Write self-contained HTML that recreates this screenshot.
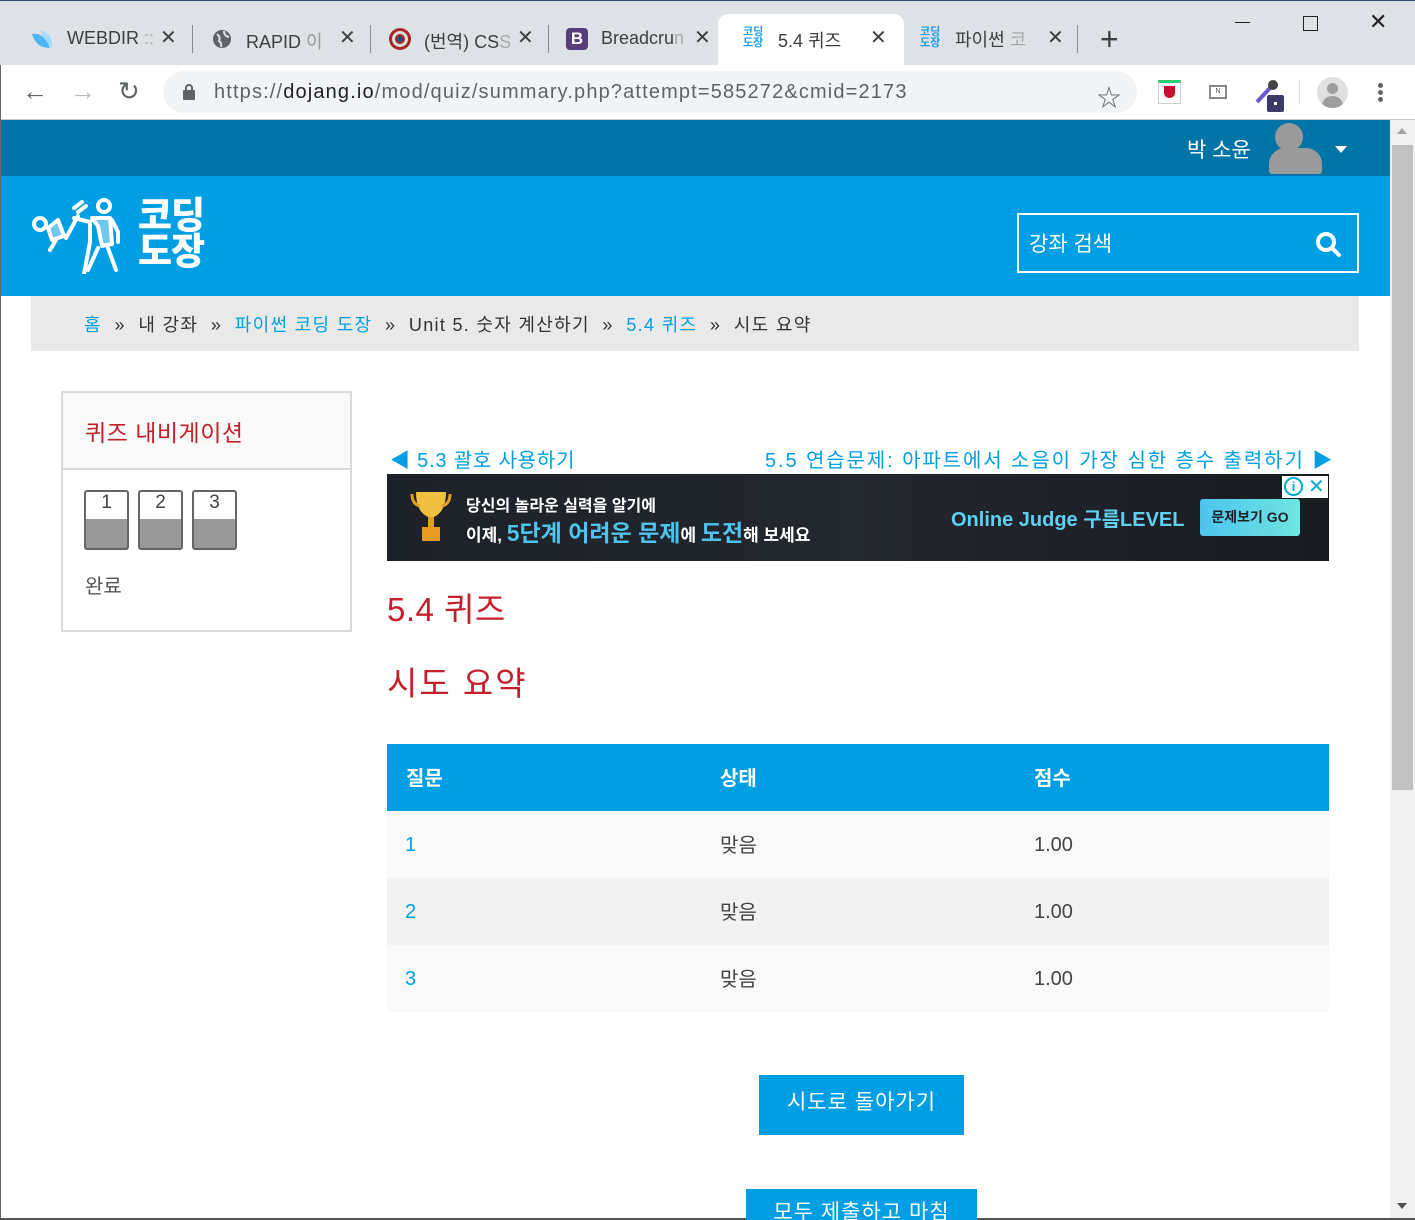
<!DOCTYPE html>
<html><head><meta charset="utf-8">
<style>
*{margin:0;padding:0;box-sizing:border-box}
body{width:1415px;height:1220px;overflow:hidden;position:relative;background:#fff;font-family:"Liberation Sans","Noto Sans CJK KR","NanumGothic",sans-serif;color:#333}
.a{position:absolute;white-space:nowrap}
.tab{position:absolute;top:22px;font-size:18px;color:#3c4043}
.x{position:absolute;top:25px;font-size:20px;color:#3c4043}
.sep{position:absolute;top:25px;width:1px;height:28px;background:#8a8d92}
.blue{color:#009fe3}
</style></head><body>
<div class="a" style="left:0;top:0;width:1415px;height:65px;background:#dee1e6"></div>
<div class="a" style="left:0;top:0;width:1415px;height:1px;background:#2a4d7a"></div>
<svg class="a" style="left:30px;top:28px" width="26" height="22"><path d="M2 6 Q14 4 20 20 Q6 20 2 6Z" fill="#4fb6f5"/><path d="M10 2 Q24 6 22 20 Q14 12 10 2Z" fill="#a6dafc"/></svg>
<div class="tab" style="left:67px;top:28px">WEBDIR <span style="color:#aaa">::</span></div>
<div class="x" style="left:160px">✕</div>
<div class="sep" style="left:192px"></div>
<svg class="a" style="left:212px;top:29px" width="20" height="20"><circle cx="10" cy="10" r="9" fill="#5f6368"/><path d="M5 5 Q9 8 7 12 Q10 14 9 18 M12 2 Q12 7 17 8" stroke="#dee1e6" stroke-width="2" fill="none"/></svg>
<div class="tab" style="left:246px;top:28px">RAPID <span style="color:#999">이</span></div>
<div class="x" style="left:339px">✕</div>
<div class="sep" style="left:370px"></div>
<svg class="a" style="left:388px;top:27px" width="24" height="24"><circle cx="12" cy="12" r="11" fill="#a62a22"/><circle cx="12" cy="12" r="8" fill="#ddd"/><circle cx="12" cy="12" r="5" fill="#a62a22"/><circle cx="12" cy="12" r="3" fill="#2a4b8a"/></svg>
<div class="tab" style="left:424px;top:28px">(번역) CS<span style="color:#aaa">S</span></div>
<div class="x" style="left:517px">✕</div>
<div class="sep" style="left:548px"></div>
<div class="a" style="left:566px;top:28px;width:22px;height:22px;background:#563d7c;border-radius:4px;color:#fff;font-weight:bold;font-size:17px;text-align:center;line-height:22px">B</div>
<div class="tab" style="left:601px;top:28px">Breadcru<span style="color:#aaa">n</span></div>
<div class="x" style="left:694px">✕</div>
<div class="a" style="left:718px;top:14px;width:186px;height:52px;background:#fff;border-radius:10px 10px 0 0"></div>
<div class="a" style="left:743px;top:27px;font-size:11px;line-height:11px;font-weight:bold;color:#1aa0e8">코딩<br>도장</div>
<div class="tab" style="left:778px;top:27px">5.4 퀴즈</div>
<div class="x" style="left:870px">✕</div>
<div class="a" style="left:920px;top:27px;font-size:11px;line-height:11px;font-weight:bold;color:#1aa0e8">코딩<br>도장</div>
<div class="tab" style="left:955px;top:26px">파이썬 <span style="color:#aaa">코</span></div>
<div class="x" style="left:1047px">✕</div>
<div class="sep" style="left:1077px"></div>
<div class="a" style="left:1100px;top:21px;font-size:32px;color:#3c4043;font-weight:300">+</div>
<div class="a" style="left:1235px;top:22px;width:15px;height:1px;background:#222"></div>
<div class="a" style="left:1303px;top:16px;width:15px;height:15px;border:1px solid #222"></div>
<div class="a" style="left:1369px;top:9px;font-size:22px;color:#222">✕</div>
<div class="a" style="left:0;top:65px;width:1415px;height:55px;background:#fff;border-bottom:1px solid #ccc"></div>
<div class="a" style="left:22px;top:76px;font-size:26px;color:#5f6368">←</div>
<div class="a" style="left:70px;top:76px;font-size:26px;color:#bbb">→</div>
<div class="a" style="left:118px;top:76px;font-size:26px;color:#5f6368">↻</div>
<div class="a" style="left:163px;top:71px;width:974px;height:42px;background:#f1f3f4;border-radius:21px"></div>
<svg class="a" style="left:182px;top:83px" width="14" height="18"><rect x="1" y="7" width="12" height="10" rx="1" fill="#5f6368"/><path d="M4 7 V5 a3 3 0 0 1 6 0 V7" stroke="#5f6368" stroke-width="2" fill="none"/></svg>
<div class="a" style="left:214px;top:81px;font-size:20px;color:#5f6368;letter-spacing:1.15px">https://<span style="color:#202124">dojang.io</span>/mod/quiz/summary.php?attempt=585272&amp;cmid=2173</div>
<div class="a" style="left:1097px;top:78px;font-size:24px;color:#5f6368">☆</div>
<div class="a" style="left:1158px;top:80px;width:23px;height:24px;border:1px solid #ccc;border-top:3px solid #2ecc71;background:#fff"></div>
<div class="a" style="left:1164px;top:86px;width:11px;height:12px;background:#c8102e;border-radius:0 0 5px 5px"></div>
<div class="a" style="left:1209px;top:85px;width:18px;height:14px;border:2px solid #888;font-size:7px;text-align:center;line-height:9px;color:#555">N</div>
<svg class="a" style="left:1254px;top:78px" width="34" height="36"><path d="M3 24 L16 10" stroke="#6a5acd" stroke-width="4"/><circle cx="19" cy="7" r="5" fill="#444"/><rect x="13" y="17" width="17" height="17" rx="2" fill="#3d3a6b"/><rect x="20" y="24" width="3" height="3" fill="#fff"/></svg>
<div class="a" style="left:1299px;top:80px;width:1px;height:24px;background:#ddd"></div>
<div class="a" style="left:1317px;top:77px;width:31px;height:31px;border-radius:50%;background:#e0e0e0;overflow:hidden"><div style="position:absolute;left:10px;top:6px;width:11px;height:11px;border-radius:50%;background:#9e9e9e"></div><div style="position:absolute;left:5px;top:19px;width:21px;height:14px;border-radius:10px 10px 0 0;background:#9e9e9e"></div></div>
<div class="a" style="left:1378px;top:83px;width:5px;height:5px;border-radius:50%;background:#5f6368;box-shadow:0 7px 0 #5f6368,0 14px 0 #5f6368"></div>
<div class="a" style="left:0;top:65px;width:1px;height:1155px;background:#666"></div>
<div class="a" style="left:1px;top:120px;width:1389px;height:56px;background:#0074a6"></div>
<div class="a" style="left:1187px;top:134px;font-size:21px;color:#fff">박 소윤</div>
<div class="a" style="left:1275px;top:123px;width:28px;height:28px;border-radius:50%;background:#9a9a9a"></div>
<div class="a" style="left:1269px;top:148px;width:53px;height:26px;border-radius:16px 16px 3px 3px;background:#9a9a9a"></div>
<div class="a" style="left:1335px;top:146px;width:0;height:0;border-left:6px solid transparent;border-right:6px solid transparent;border-top:7px solid #fff"></div>
<div class="a" style="left:1px;top:176px;width:1389px;height:120px;background:#009fe3"></div>
<svg class="a" style="left:30px;top:198px" width="92" height="76" fill="none" stroke="#fff" stroke-width="4" stroke-linecap="round" stroke-linejoin="round">
<circle cx="10" cy="26" r="6"/><path d="M18 30 L28 22 L34 38 L22 42 Z" fill="#6fc6f0"/><path d="M26 42 L20 52"/>
<path d="M36 40 L48 18 M44 10 L52 4 M48 14 L56 8"/><path d="M44 20 L60 24 L60 44 L54 76"/>
<circle cx="74" cy="8" r="6"/><path d="M62 20 L80 20 L82 46 L72 48 L68 28 Z" fill="#6fc6f0"/><path d="M82 22 L88 34 L88 44 M68 50 L58 72 M78 50 L86 72"/>
</svg>
<div class="a" style="left:138px;top:198px;font-size:37px;line-height:36px;font-weight:900;color:#fff;letter-spacing:-1px">코딩<br>도장</div>
<div class="a" style="left:1017px;top:213px;width:342px;height:60px;border:2px solid #fff"></div>
<div class="a" style="left:1029px;top:228px;font-size:21px;color:#fff">강좌 검색</div>
<svg class="a" style="left:1314px;top:230px" width="30" height="30"><circle cx="12" cy="12" r="8" stroke="#fff" stroke-width="4" fill="none"/><path d="M18 18 L25 25" stroke="#fff" stroke-width="4" stroke-linecap="round"/></svg>
<div class="a" style="left:31px;top:296px;width:1328px;height:55px;background:#e9e9e9"></div>
<div class="a" style="left:84px;top:311px;font-size:18px;color:#333;letter-spacing:1.3px"><span class="blue">홈</span> &nbsp;» &nbsp;내 강좌 &nbsp;» &nbsp;<span class="blue">파이썬 코딩 도장</span> &nbsp;» &nbsp;Unit 5. 숫자 계산하기 &nbsp;» &nbsp;<span class="blue">5.4 퀴즈</span> &nbsp;» &nbsp;시도 요약</div>
<div class="a" style="left:61px;top:391px;width:291px;height:241px;border:2px solid #d9d9d9"></div>
<div class="a" style="left:63px;top:393px;width:287px;height:77px;background:#f9f9f9;border-bottom:2px solid #d9d9d9"></div>
<div class="a" style="left:85px;top:414px;font-size:23px;color:#c4202a;letter-spacing:0.5px">퀴즈 내비게이션</div>
<div class="a" style="left:84px;top:490px;width:45px;height:60px;border:2px solid #666;border-radius:3px;background:linear-gradient(#fff 0 27px,#999 27px)"><div style="text-align:center;font-size:19px;color:#444">1</div></div>
<div class="a" style="left:138px;top:490px;width:45px;height:60px;border:2px solid #666;border-radius:3px;background:linear-gradient(#fff 0 27px,#999 27px)"><div style="text-align:center;font-size:19px;color:#444">2</div></div>
<div class="a" style="left:192px;top:490px;width:45px;height:60px;border:2px solid #666;border-radius:3px;background:linear-gradient(#fff 0 27px,#999 27px)"><div style="text-align:center;font-size:19px;color:#444">3</div></div>
<div class="a" style="left:85px;top:570px;font-size:20px;color:#555">완료</div>
<div class="a" style="left:390px;top:444px;font-size:20px;color:#009fe3;letter-spacing:0.8px">◀ 5.3 괄호 사용하기</div>
<div class="a" style="left:765px;top:444px;font-size:20px;color:#009fe3;letter-spacing:1.9px">5.5 연습문제: 아파트에서 소음이 가장 심한 층수 출력하기 ▶</div>
<div class="a" style="left:387px;top:474px;width:942px;height:87px;background:linear-gradient(90deg,#1d2128,#23272e 50%,#181b20)"></div>
<svg class="a" style="left:410px;top:490px" width="42" height="54"><path d="M6 2 H36 Q36 24 21 28 Q6 24 6 2Z" fill="#f0c040"/><path d="M2 4 Q2 14 10 16 M40 4 Q40 14 32 16" stroke="#e0a020" stroke-width="3" fill="none"/><rect x="18" y="27" width="6" height="10" fill="#e0a020"/><rect x="12" y="37" width="18" height="14" fill="#e89a20"/></svg>
<div class="a" style="left:466px;top:492px;font-size:16px;font-weight:bold;color:#fff">당신의 놀라운 실력을 알기에</div>
<div class="a" style="left:466px;top:514px;font-size:17px;font-weight:bold;color:#fff">이제, <span style="color:#4fc3ef;font-size:23px">5단계 어려운 문제</span>에 <span style="color:#4fc3ef;font-size:23px">도전</span>해 보세요</div>
<div class="a" style="left:951px;top:503px;font-size:20px;font-weight:bold;color:#5fd0f0">Online Judge 구름LEVEL</div>
<div class="a" style="left:1200px;top:499px;width:100px;height:37px;background:linear-gradient(90deg,#4fc3ef,#6ee6e0);border-radius:3px;font-size:14px;font-weight:bold;color:#1d2128;text-align:center;line-height:37px">문제보기 GO</div>
<div class="a" style="left:1282px;top:476px;width:46px;height:22px;background:#fff"></div>
<div class="a" style="left:1284px;top:477px;width:19px;height:19px;border:2px solid #00aecd;border-radius:50%;color:#00aecd;font-size:13px;font-weight:bold;text-align:center;line-height:15px">i</div>
<div class="a" style="left:1308px;top:474px;font-size:20px;color:#00aecd">✕</div>
<div class="a" style="left:387px;top:583px;font-size:33px;color:#c4202a;letter-spacing:0.5px">5.4 퀴즈</div>
<div class="a" style="left:387px;top:657px;font-size:33px;color:#c4202a;letter-spacing:2px">시도 요약</div>
<div class="a" style="left:387px;top:744px;width:942px;height:67px;background:#009fe3"></div>
<div class="a" style="left:406px;top:762px;font-size:20px;font-weight:bold;color:#fff">질문</div>
<div class="a" style="left:720px;top:762px;font-size:20px;font-weight:bold;color:#fff">상태</div>
<div class="a" style="left:1034px;top:762px;font-size:20px;font-weight:bold;color:#fff">점수</div>
<div class="a" style="left:387px;top:811px;width:942px;height:67px;background:#f9f9f9"></div>
<div class="a" style="left:387px;top:878px;width:942px;height:67px;background:#f2f2f2"></div>
<div class="a" style="left:387px;top:945px;width:942px;height:67px;background:#f9f9f9"></div>
<div class="a blue" style="left:405px;top:834px;font-size:20px">1</div>
<div class="a" style="left:720px;top:829px;font-size:20px;color:#444">맞음</div>
<div class="a" style="left:1034px;top:834px;font-size:20px;color:#444">1.00</div>
<div class="a blue" style="left:405px;top:901px;font-size:20px">2</div>
<div class="a" style="left:720px;top:896px;font-size:20px;color:#444">맞음</div>
<div class="a" style="left:1034px;top:901px;font-size:20px;color:#444">1.00</div>
<div class="a blue" style="left:405px;top:968px;font-size:20px">3</div>
<div class="a" style="left:720px;top:963px;font-size:20px;color:#444">맞음</div>
<div class="a" style="left:1034px;top:968px;font-size:20px;color:#444">1.00</div>
<div class="a" style="left:759px;top:1075px;width:205px;height:60px;background:#009fe3;color:#fff;font-size:21px;text-align:center;line-height:56px;letter-spacing:1px">시도로 돌아가기</div>
<div class="a" style="left:1390px;top:120px;width:25px;height:1100px;background:#f0f0f0"></div>
<div class="a" style="left:1392px;top:145px;width:21px;height:645px;background:#c1c1c1"></div>
<div class="a" style="left:1397px;top:128px;width:0;height:0;border-left:5px solid transparent;border-right:5px solid transparent;border-bottom:6px solid #a3a3a3"></div>
<div class="a" style="left:1397px;top:1203px;width:0;height:0;border-left:5px solid transparent;border-right:5px solid transparent;border-top:6px solid #505050"></div>
<div class="a" style="left:0;top:1218px;width:1415px;height:2px;background:#555"></div>
<div class="a" style="left:746px;top:1189px;width:231px;height:31px;background:#009fe3;color:#fff;font-size:21px;text-align:center;line-height:48px;overflow:hidden;letter-spacing:1px">모두 제출하고 마침</div>
</body></html>
